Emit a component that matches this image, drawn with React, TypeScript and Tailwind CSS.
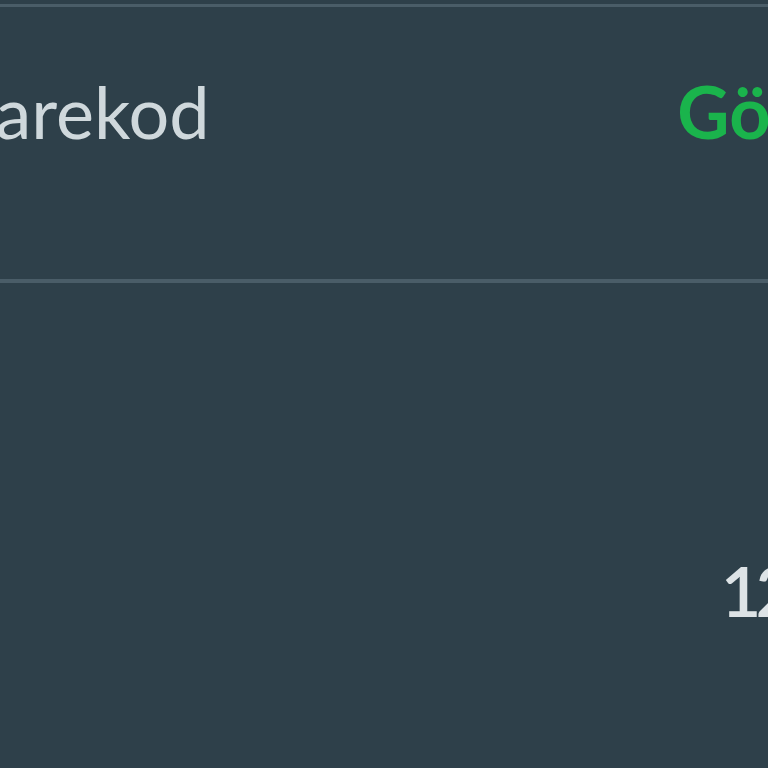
export default function App() {
  return (
    <div className="h-[768px] w-[768px] overflow-hidden bg-[#2e404a] font-['Lato',sans-serif]">
      <div className="mt-[4px] h-[3px] bg-[#4a5d68]" />
      <div className="flex h-[272px] items-start justify-between pt-[68px]">
        <span className="-ml-[52px] whitespace-nowrap text-[72px] font-normal leading-none text-[#cfd8dc]">
          Karekod
        </span>
        <span className="-mr-[126px] whitespace-nowrap text-[72px] font-bold leading-none text-[#1ab44c]">
          Göster
        </span>
      </div>
      <div className="h-[4px] bg-[#4a5d68]" />
      <div className="flex justify-end pt-[272px]">
        <span className="-mr-[22px] text-[70px] font-semibold leading-none tracking-[-6px] text-[#dde3e6]">
          12
        </span>
      </div>
    </div>
  );
}
